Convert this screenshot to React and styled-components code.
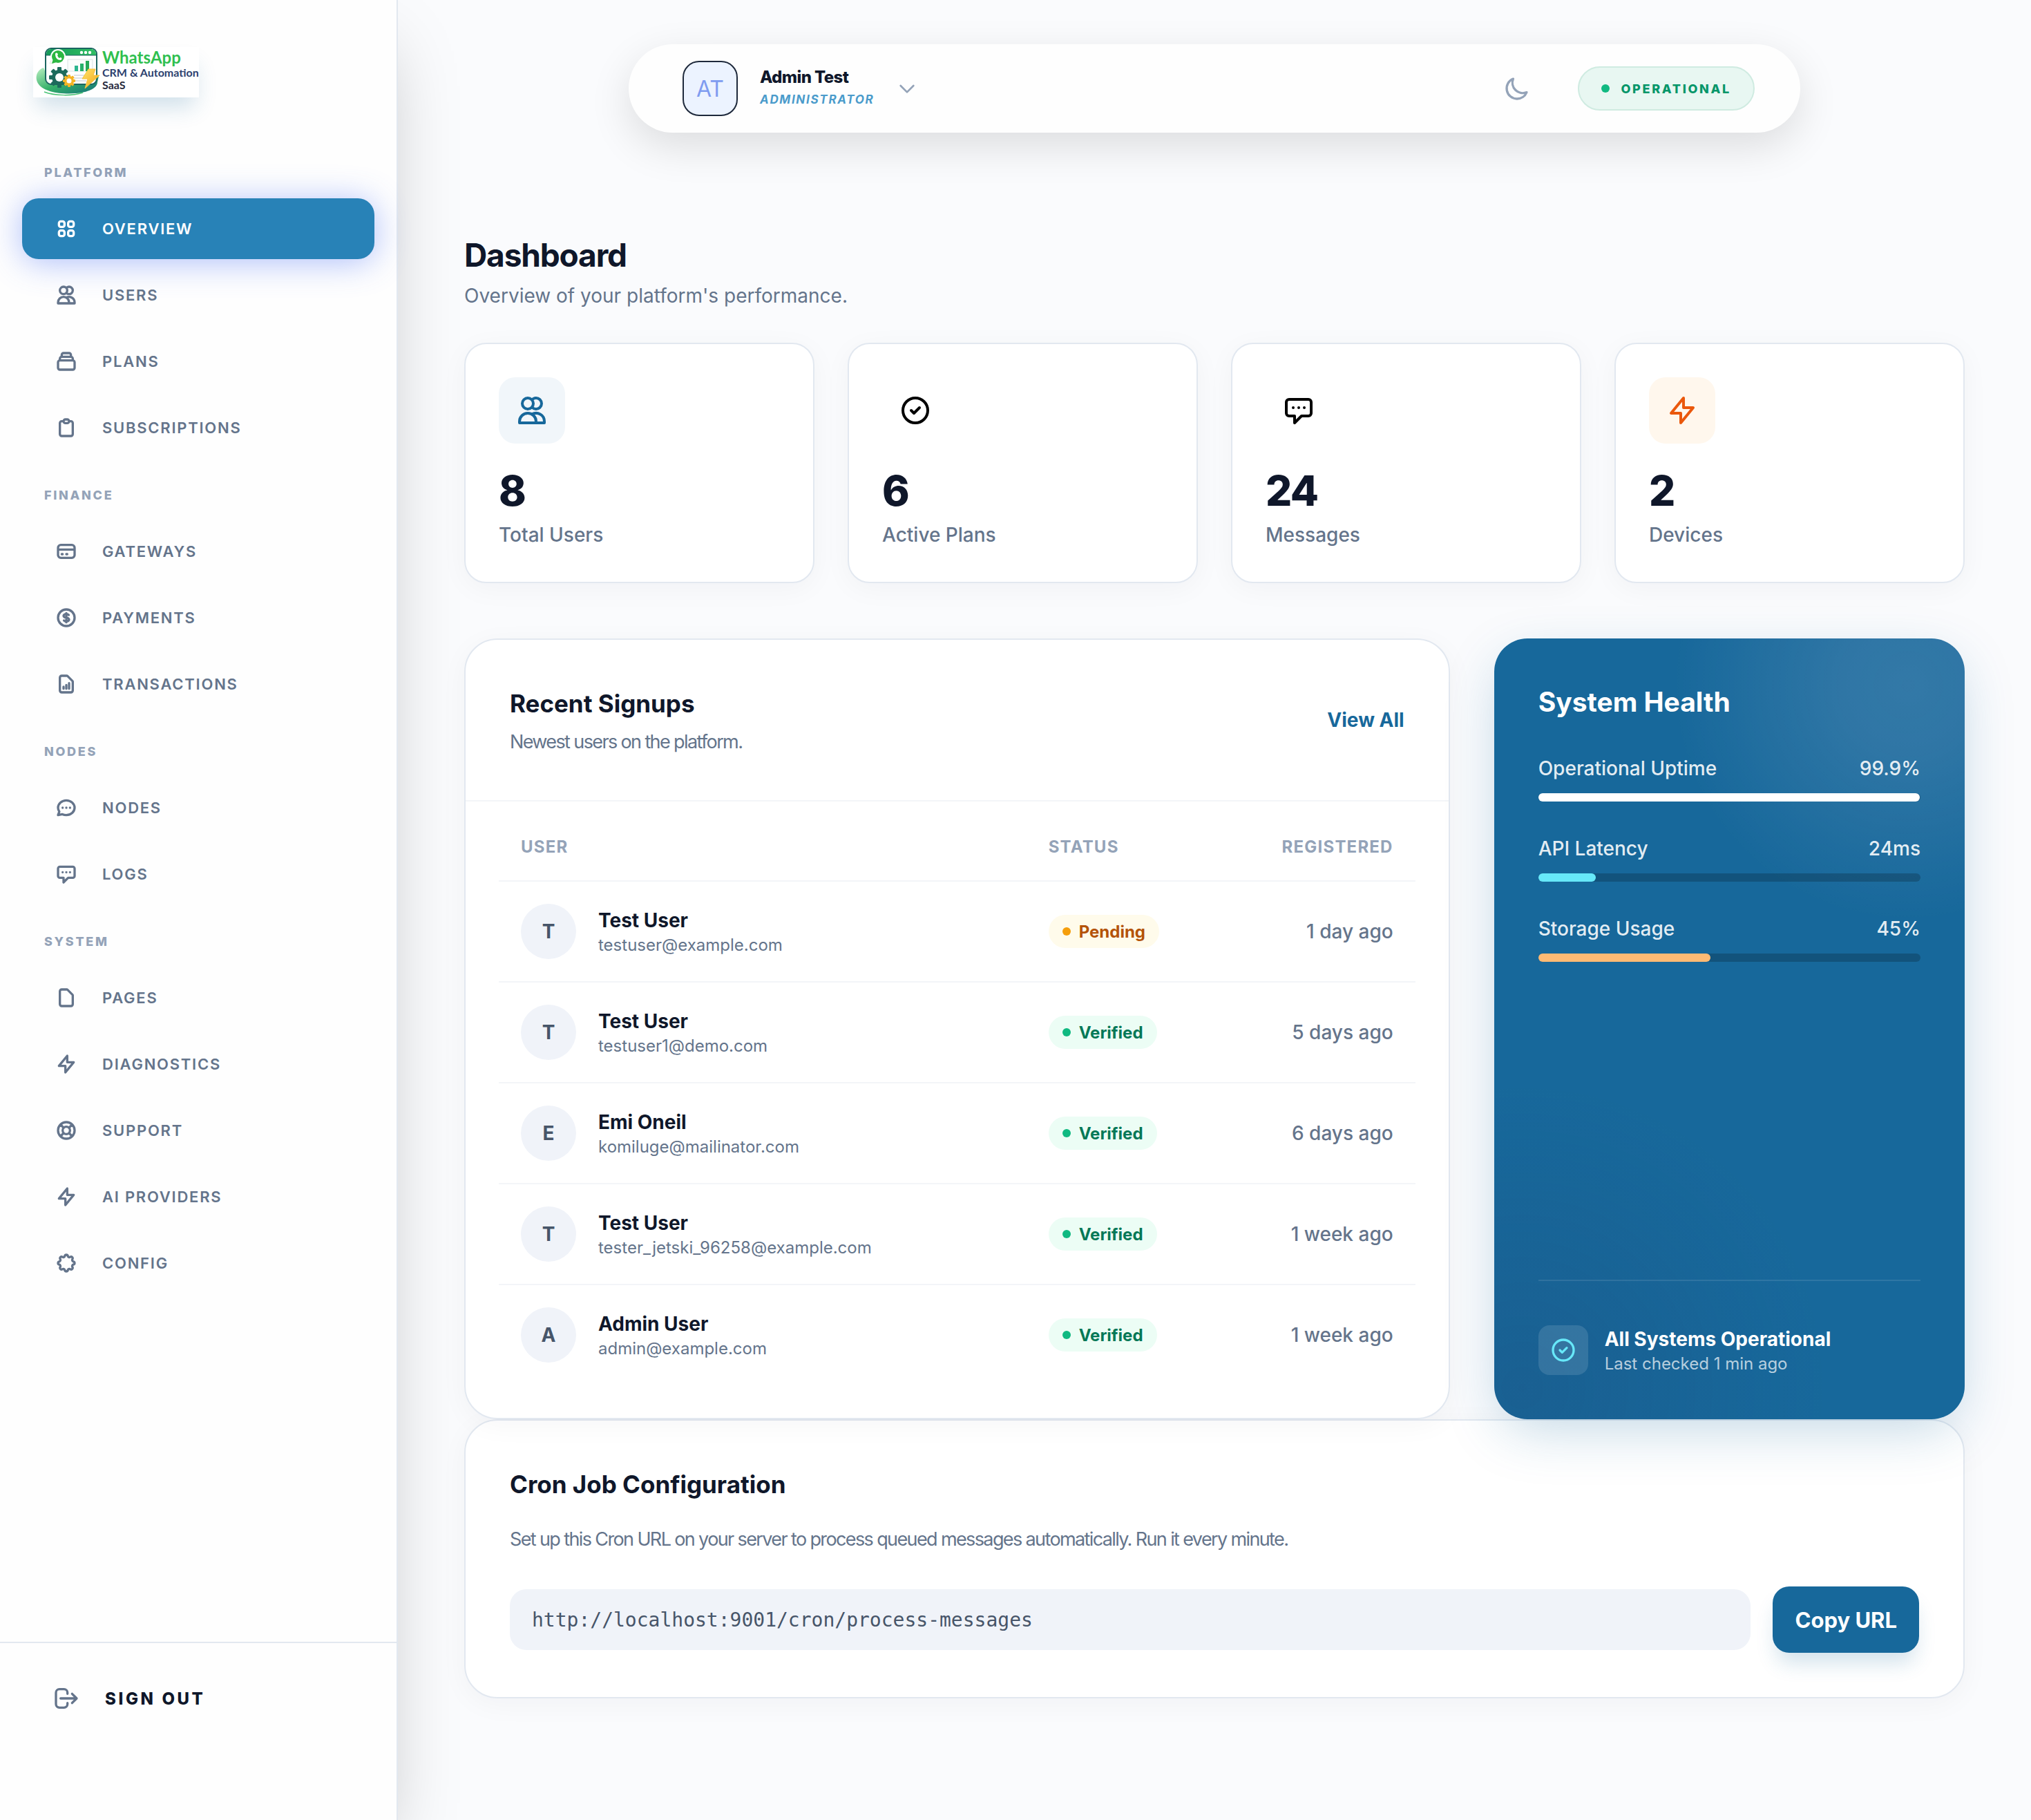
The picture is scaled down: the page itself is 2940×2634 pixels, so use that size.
import React from 'react';
import styled, { createGlobalStyle, css } from 'styled-components';

const color = {
  brand: '#17689b',
  active: '#2882b7',
  ink: '#0f172a',
  body: '#64748b',
  muted: '#94a3b8',
  line: '#e2e8f0',
  hair: '#f3f5f8',
  soft: '#f0f3f9',
  page: '#fafbfd',
};

const GlobalStyle = createGlobalStyle`
  *, *::before, *::after { box-sizing: border-box; }
  body {
    margin: 0;
    background: ${color.page};
    color: ${color.ink};
    font-family: Inter, "Liberation Sans", sans-serif;
    -webkit-font-smoothing: antialiased;
  }
  h1, h2, p { margin: 0; }
  button, input { font-family: inherit; }
  a { text-decoration: none; }
`;

/* ---------- icons ---------- */

const paths = {
  overview:
    'M4 6a2 2 0 012-2h2a2 2 0 012 2v2a2 2 0 01-2 2H6a2 2 0 01-2-2V6zM14 6a2 2 0 012-2h2a2 2 0 012 2v2a2 2 0 01-2 2h-2a2 2 0 01-2-2V6zM4 16a2 2 0 012-2h2a2 2 0 012 2v2a2 2 0 01-2 2H6a2 2 0 01-2-2v-2zM14 16a2 2 0 012-2h2a2 2 0 012 2v2a2 2 0 01-2 2h-2a2 2 0 01-2-2v-2z',
  users:
    'M12 4.354a4 4 0 110 5.292M15 21H3v-1a6 6 0 0112 0v1zm0 0h6v-1a6 6 0 00-9-5.197M13 7a4 4 0 11-8 0 4 4 0 018 0z',
  plans:
    'M19 11H5m14 0a2 2 0 012 2v6a2 2 0 01-2 2H5a2 2 0 01-2-2v-6a2 2 0 012-2m14 0V9a2 2 0 00-2-2M5 11V9a2 2 0 012-2m0 0V5a2 2 0 012-2h6a2 2 0 012 2v2M7 7h10',
  clipboard:
    'M9 5H7a2 2 0 00-2 2v12a2 2 0 002 2h10a2 2 0 002-2V7a2 2 0 00-2-2h-2M9 5a2 2 0 002 2h2a2 2 0 002-2M9 5a2 2 0 012-2h2a2 2 0 012 2',
  card:
    'M3 10h18M7 15h1m4 0h1m-7 4h12a3 3 0 003-3V8a3 3 0 00-3-3H6a3 3 0 00-3 3v8a3 3 0 003 3z',
  dollar:
    'M12 8c-1.657 0-3 .895-3 2s1.343 2 3 2 3 .895 3 2-1.343 2-3 2m0-8c1.11 0 2.08.402 2.599 1M12 8V7m0 1v8m0 0v1m0-1c-1.11 0-2.08-.402-2.599-1M21 12a9 9 0 11-18 0 9 9 0 0118 0z',
  report:
    'M9 17v-2m3 2v-4m3 4v-6m2 10H7a2 2 0 01-2-2V5a2 2 0 012-2h5.586a1 1 0 01.707.293l5.414 5.414a1 1 0 01.293.707V19a2 2 0 01-2 2z',
  chat:
    'M8 12h.01M12 12h.01M16 12h.01M21 12c0 4.418-4.03 8-9 8a9.863 9.863 0 01-4.255-.949L3 20l1.395-3.72C3.512 15.042 3 13.574 3 12c0-4.418 4.03-8 9-8s9 3.582 9 8z',
  message:
    'M8 10h.01M12 10h.01M16 10h.01M9 16H5a2 2 0 01-2-2V6a2 2 0 012-2h14a2 2 0 012 2v8a2 2 0 01-2 2h-5l-5 5v-5z',
  page:
    'M7 21h10a2 2 0 002-2V9.414a1 1 0 00-.293-.707l-5.414-5.414A1 1 0 0012.586 3H7a2 2 0 00-2 2v14a2 2 0 002 2z',
  bolt: 'M13 10V3L4 14h7v7l9-11h-7z',
  lifebuoy:
    'M18.364 5.636l-3.536 3.536m0 5.656l3.536 3.536M9.172 9.172L5.636 5.636m3.536 9.192l-3.536 3.536M21 12a9 9 0 11-18 0 9 9 0 0118 0zm-5 0a4 4 0 11-8 0 4 4 0 018 0z',
  cog:
    'M10.325 4.317c.426-1.756 2.924-1.756 3.35 0a1.724 1.724 0 002.573 1.066c1.543-.94 3.31.826 2.37 2.37a1.724 1.724 0 001.065 2.572c1.756.426 1.756 2.924 0 3.35a1.724 1.724 0 00-1.066 2.573c.94 1.543-.826 3.31-2.37 2.37a1.724 1.724 0 00-2.572 1.065c-.426 1.756-2.924 1.756-3.35 0a1.724 1.724 0 00-2.573-1.066c-1.543.94-3.31-.826-2.37-2.37a1.724 1.724 0 00-1.065-2.572c-1.756-.426-1.756-2.924 0-3.35a1.724 1.724 0 001.066-2.573c-.94-1.543.826-3.31 2.37-2.37.996.608 2.296.07 2.572-1.065z',
  check: 'M9 12l2 2 4-4m6 2a9 9 0 11-18 0 9 9 0 0118 0z',
  signOut:
    'M17 16l4-4m0 0l-4-4m4 4H7m6 4v1a3 3 0 01-3 3H6a3 3 0 01-3-3V7a3 3 0 013-3h4a3 3 0 013 3v1',
  chevron: 'M19 9l-7 7-7-7',
  moon: 'M20.354 15.354A9 9 0 018.646 3.646 9.003 9.003 0 0012 21a9.003 9.003 0 008.354-5.646z',
};

function Icon({ name, size = 32, weight = 2 }) {
  return (
    <svg
      width={size}
      height={size}
      viewBox="0 0 24 24"
      fill="none"
      stroke="currentColor"
      strokeWidth={weight}
      strokeLinecap="round"
      strokeLinejoin="round"
      aria-hidden="true"
    >
      <path d={paths[name]} />
    </svg>
  );
}

function LogoMark() {
  const teeth = [0, 45, 90, 135, 180, 225, 270, 315];
  return (
    <svg width="100" height="72" viewBox="0 0 100 72" aria-hidden="true">
      <defs>
        <linearGradient id="swoosh" x1="0" y1="0" x2="1" y2="1">
          <stop offset="0" stopColor="#b9efc0" />
          <stop offset="0.5" stopColor="#35b069" />
          <stop offset="1" stopColor="#12707a" />
        </linearGradient>
        <linearGradient id="bar" x1="0" y1="0" x2="1" y2="0">
          <stop offset="0" stopColor="#149a58" />
          <stop offset="1" stopColor="#2fbf63" />
        </linearGradient>
        <linearGradient id="flash" x1="0" y1="0" x2="1" y2="1">
          <stop offset="0" stopColor="#ffe36b" />
          <stop offset="1" stopColor="#f2a516" />
        </linearGradient>
      </defs>
      <path d="M15 30C4 34 2 46 8 54c8 11 32 15 54 13 16-1 31-7 31-16l2-9-10 8-62-2z" fill="url(#swoosh)" />
      <path d="M16 65c16 6 42 6 56 1" fill="none" stroke="#4cc477" strokeWidth="1.5" />
      <rect x="18" y="2" width="74" height="52" rx="8" fill="#fff" stroke="#1b6560" strokeWidth="2" />
      <path d="M19 12V10a7 7 0 017-7h58a7 7 0 017 7v2z" fill="url(#bar)" />
      <path d="M18 12h74" stroke="#1b6560" strokeWidth="1" />
      <circle cx="70" cy="8" r="2.2" fill="#fff" />
      <circle cx="76" cy="8" r="2.2" fill="#fff" />
      <circle cx="82" cy="8" r="2.2" fill="#fff" />
      <path d="M50 18h36v17H50z" fill="#fbfdfc" stroke="#dbe4e4" />
      <rect x="60" y="27" width="5" height="8" fill="#2bb58e" />
      <rect x="68" y="24" width="5" height="11" fill="#27b06a" />
      <rect x="76" y="20" width="5" height="15" fill="#24a957" />
      <path d="M59 41h20M59 45h16M59 49h18" stroke="#d3d9de" strokeWidth="1.5" />
      <path d="M24 24l3-6a10 10 0 115 5z" fill="#fff" stroke="#d9ead9" />
      <circle cx="36" cy="14" r="11" fill="#fff" />
      <circle cx="36" cy="14" r="9" fill="#2cb742" />
      <path d="M27 24l2-7 5 5z" fill="#2cb742" />
      <path d="M32 10c0 6 3 9 8 9 2-1 2-3 0-4l-2 1c-2-1-2-2-3-4l1-1c-1-3-3-3-4-1z" fill="#fff" />
      <g transform="translate(38 44)" fill="#1d6a5c">
        {teeth.map((angle) => (
          <rect key={angle} x="-3" y="-15" width="6" height="8" rx="1" transform={`rotate(${angle})`} />
        ))}
        <circle r="11" />
        <circle r="6" fill="#fff" />
      </g>
      <g transform="translate(52 49)" fill="#f6b426">
        {teeth.map((angle) => (
          <rect key={angle} x="-2" y="-9" width="4" height="5" rx="1" transform={`rotate(${angle})`} />
        ))}
        <circle r="7" />
        <circle r="3.5" fill="#fff" />
      </g>
      <path d="M80 32h10l-3 9h9L75 60l4-14h-8z" fill="url(#flash)" stroke="#f6c23a" strokeWidth="1" strokeLinejoin="round" />
    </svg>
  );
}

/* ---------- shell ---------- */

const Shell = styled.div`
  display: grid;
  grid-template-columns: 576px minmax(0, 1fr);
  min-height: 100vh;
`;

const Sidebar = styled.aside`
  display: flex;
  flex-direction: column;
  padding-top: 68px;
  background: #fefefe;
  border-right: 2px solid ${color.line};
  box-shadow: 0 50px 100px -24px rgba(0, 0, 0, 0.25);
`;

const Logo = styled.a`
  display: flex;
  width: 240px;
  height: 73px;
  margin: 0 0 95px 48px;
  background: #fff;
  box-shadow: 0 20px 32px -6px rgba(23, 104, 155, 0.2);
`;

const LogoText = styled.span`
  display: flex;
  flex-direction: column;
  padding-top: 2px;
  font-family: Lato, "Liberation Sans", sans-serif;
  font-weight: 700;
  font-size: 16px;
  line-height: 18px;
  white-space: nowrap;
  color: #272a3c;
`;

const LogoName = styled.span`
  font-size: 24px;
  line-height: 26px;
  color: #2fbf4f;
`;

const LogoTag = styled.span`
  color: #2c3f6e;
`;

const Nav = styled.nav`
  display: flex;
  flex-direction: column;
  gap: 40px;
  padding: 0 32px;
`;

const NavSection = styled.section`
  display: flex;
  flex-direction: column;
  gap: 8px;
`;

const NavLabel = styled.h2`
  padding: 0 32px;
  margin-bottom: 16px;
  font-size: 18px;
  line-height: 27px;
  font-weight: 800;
  letter-spacing: 0.15em;
  color: ${color.muted};
`;

const NavLink = styled.a`
  display: flex;
  align-items: center;
  gap: 36px;
  height: 88px;
  padding: 0 48px;
  border-radius: 24px;
  font-size: 22px;
  font-weight: 600;
  letter-spacing: 0.08em;
  color: ${color.body};
  ${(p) =>
    p.$active &&
    css`
      color: #fff;
      background: ${color.active};
      box-shadow: 0 4px 48px rgba(70, 110, 246, 0.45);
    `}
`;

const SidebarFooter = styled.div`
  margin-top: auto;
  padding: 48px 64px 144px 64px;
  border-top: 2px solid ${color.line};
`;

const SignOut = styled.button`
  display: flex;
  align-items: center;
  gap: 36px;
  height: 64px;
  padding: 0 12px;
  border: 0;
  background: none;
  color: ${color.body};
  cursor: pointer;
`;

const SignOutText = styled.span`
  font-size: 24px;
  font-weight: 800;
  letter-spacing: 0.15em;
  color: ${color.ink};
`;

const Main = styled.main`
  padding: 64px 96px 96px;
`;

/* ---------- top bar ---------- */

const TopBar = styled.header`
  display: flex;
  align-items: center;
  justify-content: space-between;
  max-width: 1696px;
  height: 128px;
  margin: 0 auto 144px;
  padding: 0 66px;
  border-radius: 64px;
  background: #fefefe;
  box-shadow: 0 20px 60px rgba(0, 0, 0, 0.12);
`;

const Account = styled.button`
  display: flex;
  align-items: center;
  gap: 32px;
  padding: 0 12px;
  border: 0;
  background: none;
  text-align: left;
  cursor: pointer;
  color: ${color.muted};
`;

const AccountAvatar = styled.span`
  display: flex;
  align-items: center;
  justify-content: center;
  width: 80px;
  height: 80px;
  border: 2px solid #1e293b;
  border-radius: 24px;
  background: #ecf3ff;
  font-size: 32px;
  color: #7f9cf0;
`;

const AccountText = styled.span`
  display: flex;
  flex-direction: column;
`;

const AccountName = styled.span`
  font-size: 24px;
  line-height: 32px;
  font-weight: 800;
  letter-spacing: -0.025em;
  color: ${color.ink};
`;

const AccountRole = styled.span`
  font-size: 17px;
  line-height: 32px;
  font-weight: 700;
  font-style: italic;
  letter-spacing: 0.1em;
  color: #4a9bcb;
`;

const TopActions = styled.div`
  display: flex;
  align-items: center;
  gap: 44px;
`;

const ThemeButton = styled.button`
  display: flex;
  padding: 24px;
  border: 0;
  background: none;
  color: ${color.muted};
  cursor: pointer;
`;

const SystemBadge = styled.span`
  display: flex;
  align-items: center;
  gap: 16px;
  height: 64px;
  padding: 0 32px;
  border: 2px solid #cfebe1;
  border-radius: 32px;
  background: #e8f7f2;
  font-size: 18px;
  font-weight: 800;
  letter-spacing: 0.15em;
  color: #059669;
`;

const Dot = styled.i`
  width: 12px;
  height: 12px;
  border-radius: 50%;
  background: ${(p) => p.$color};
`;

/* ---------- content ---------- */

const Title = styled.h1`
  font-size: 46px;
  line-height: 66px;
  font-weight: 700;
  letter-spacing: -0.025em;
`;

const Subtitle = styled.p`
  margin: 6px 0 48px;
  font-size: 28px;
  line-height: 40px;
  font-weight: 400;
  color: ${color.body};
`;

const Stats = styled.div`
  display: grid;
  grid-template-columns: repeat(4, minmax(0, 1fr));
  gap: 48px;
  margin-bottom: 80px;
`;

const cardFrame = css`
  border: 2px solid ${color.line};
  background: #fff;
  box-shadow: 0 8px 40px rgba(15, 23, 42, 0.04);
`;

const StatCard = styled.article`
  ${cardFrame}
  padding: 48px;
  border-radius: 32px;
`;

const StatIcon = styled.div`
  display: flex;
  align-items: center;
  justify-content: center;
  width: 96px;
  height: 96px;
  margin-bottom: 32px;
  border-radius: 24px;
  color: ${(p) => p.$color};
  background: ${(p) => p.$bg};
`;

const StatValue = styled.p`
  font-size: 60px;
  line-height: 72px;
  font-weight: 800;
  letter-spacing: -0.025em;
`;

const StatLabel = styled.p`
  margin-top: 8px;
  font-size: 28px;
  line-height: 40px;
  font-weight: 500;
  color: ${color.body};
`;

const Columns = styled.div`
  display: grid;
  grid-template-columns: repeat(3, minmax(0, 1fr));
  column-gap: 64px;
`;

const Panel = styled.section`
  ${cardFrame}
  border-radius: 48px;
`;

const SignupsPanel = styled(Panel)`
  grid-column: span 2;
`;

const PanelHead = styled.div`
  display: flex;
  align-items: center;
  justify-content: space-between;
  padding: 64px;
  border-bottom: 2px solid ${color.hair};
`;

const PanelTitle = styled.h2`
  font-size: 35px;
  line-height: 56px;
  font-weight: 700;
`;

const PanelText = styled.p`
  margin-top: ${(p) => p.$gap}px;
  font-size: 27px;
  line-height: 40px;
  letter-spacing: -0.06em;
  color: ${color.body};
`;

const ViewAll = styled.a`
  font-size: 28px;
  font-weight: 700;
  color: ${color.brand};
`;

const TableWrap = styled.div`
  padding: 18px 48px 48px;
`;

const Table = styled.table`
  width: 100%;
  table-layout: fixed;
  border-collapse: separate;
  border-spacing: 0;
`;

const Th = styled.th`
  width: ${(p) => p.$width || 'auto'};
  padding: 32px;
  border-bottom: 2px solid ${color.hair};
  font-size: 24px;
  line-height: 32px;
  font-weight: 700;
  letter-spacing: 0.05em;
  text-align: ${(p) => p.$align || 'left'};
  color: ${color.muted};
`;

const Td = styled.td`
  padding: 32px;
  border-bottom: 2px solid ${color.hair};
  font-size: 28px;
  font-weight: 500;
  text-align: ${(p) => p.$align || 'left'};
  color: ${color.body};
  tr:last-child > & {
    border-bottom: 0;
  }
`;

const Person = styled.div`
  display: flex;
  align-items: center;
  gap: 32px;
`;

const PersonAvatar = styled.span`
  display: flex;
  align-items: center;
  justify-content: center;
  flex: none;
  width: 80px;
  height: 80px;
  border-radius: 50%;
  background: ${color.soft};
  font-size: 28px;
  font-weight: 700;
  color: #475569;
`;

const PersonName = styled.p`
  font-size: 28px;
  line-height: 40px;
  font-weight: 700;
  color: ${color.ink};
`;

const PersonEmail = styled.p`
  font-size: 24px;
  line-height: 32px;
  font-weight: 400;
`;

const tones = {
  Pending: { bg: '#fffbeb', fg: '#b45309', dot: '#f59e0b' },
  Verified: { bg: '#ecfdf5', fg: '#047857', dot: '#10b981' },
};

const Status = styled.span`
  display: inline-flex;
  align-items: center;
  gap: 12px;
  height: 48px;
  padding: 0 20px;
  border-radius: 24px;
  font-size: 24px;
  font-weight: 700;
  vertical-align: middle;
  color: ${(p) => tones[p.$tone].fg};
  background: ${(p) => tones[p.$tone].bg};
`;

const Health = styled.section`
  position: relative;
  display: flex;
  flex-direction: column;
  padding: 64px;
  border-radius: 48px;
  color: #fff;
  background:
    radial-gradient(circle at 88% 6%, rgba(255, 240, 255, 0.12), rgba(255, 240, 255, 0.1) 100px, transparent 340px),
    radial-gradient(circle at 6% 96%, rgba(40, 45, 90, 0.14), transparent 440px),
    ${color.brand};
  box-shadow: 0 24px 80px -12px rgba(23, 104, 155, 0.27);
`;

const HealthTitle = styled.h2`
  font-size: 39px;
  line-height: 56px;
  font-weight: 700;
`;

const Metrics = styled.div`
  display: flex;
  flex-direction: column;
  gap: 48px;
  margin-top: 48px;
`;

const MetricHead = styled.div`
  display: flex;
  justify-content: space-between;
  margin-bottom: 16px;
  font-size: 28px;
  line-height: 40px;
  font-weight: 500;
  color: rgba(255, 255, 255, 0.9);
`;

const Track = styled.div`
  height: 12px;
  border-radius: 6px;
  background: rgba(0, 0, 0, 0.2);
`;

const Fill = styled.div`
  height: 12px;
  border-radius: 6px;
  background: ${(p) => p.$color};
`;

const HealthFoot = styled.div`
  display: flex;
  align-items: center;
  gap: 24px;
  margin-top: auto;
  padding-top: 64px;
  border-top: 2px solid rgba(255, 255, 255, 0.1);
`;

const HealthIcon = styled.span`
  display: flex;
  align-items: center;
  justify-content: center;
  width: 72px;
  height: 72px;
  border-radius: 16px;
  background: rgba(255, 255, 255, 0.12);
  color: #67e8f9;
`;

const HealthState = styled.p`
  font-size: 28px;
  line-height: 40px;
  font-weight: 700;
`;

const HealthTime = styled.p`
  font-size: 24px;
  line-height: 32px;
  color: rgba(255, 255, 255, 0.7);
`;

const CronPanel = styled(Panel)`
  padding: 64px;
`;

const CronRow = styled.div`
  display: flex;
  align-items: center;
  gap: 32px;
  margin-top: 48px;
`;

const CronInput = styled.input`
  flex: 1;
  min-width: 0;
  height: 88px;
  padding: 0 32px;
  border: 0;
  border-radius: 24px;
  background: ${color.soft};
  font-family: "DejaVu Sans Mono", "Liberation Mono", monospace;
  font-size: 28px;
  color: #475569;
`;

const CopyButton = styled.button`
  height: 96px;
  padding: 0 32px;
  border: 0;
  border-radius: 24px;
  font-size: 31px;
  font-weight: 700;
  color: #fff;
  background: ${color.brand};
  box-shadow: 0 20px 30px -6px rgba(23, 104, 155, 0.2);
  cursor: pointer;
`;

/* ---------- data ---------- */

const menu = [
  {
    label: 'PLATFORM',
    items: [
      ['OVERVIEW', 'overview'],
      ['USERS', 'users'],
      ['PLANS', 'plans'],
      ['SUBSCRIPTIONS', 'clipboard'],
    ],
  },
  {
    label: 'FINANCE',
    items: [
      ['GATEWAYS', 'card'],
      ['PAYMENTS', 'dollar'],
      ['TRANSACTIONS', 'report'],
    ],
  },
  {
    label: 'NODES',
    items: [
      ['NODES', 'chat'],
      ['LOGS', 'message'],
    ],
  },
  {
    label: 'SYSTEM',
    items: [
      ['PAGES', 'page'],
      ['DIAGNOSTICS', 'bolt'],
      ['SUPPORT', 'lifebuoy'],
      ['AI PROVIDERS', 'bolt'],
      ['CONFIG', 'cog'],
    ],
  },
];

const stats = [
  { value: '8', label: 'Total Users', icon: 'users', fg: color.brand, bg: '#f1f6fa' },
  { value: '6', label: 'Active Plans', icon: 'check', fg: '#000', bg: 'transparent' },
  { value: '24', label: 'Messages', icon: 'message', fg: '#000', bg: 'transparent' },
  { value: '2', label: 'Devices', icon: 'bolt', fg: '#ea580c', bg: '#fff7ed' },
];

const signups = [
  { name: 'Test User', email: 'testuser@example.com', status: 'Pending', when: '1 day ago' },
  { name: 'Test User', email: 'testuser1@demo.com', status: 'Verified', when: '5 days ago' },
  { name: 'Emi Oneil', email: 'komiluge@mailinator.com', status: 'Verified', when: '6 days ago' },
  { name: 'Test User', email: 'tester_jetski_96258@example.com', status: 'Verified', when: '1 week ago' },
  { name: 'Admin User', email: 'admin@example.com', status: 'Verified', when: '1 week ago' },
];

const metrics = [
  { label: 'Operational Uptime', value: '99.9%', share: 99.9, color: '#fff' },
  { label: 'API Latency', value: '24ms', share: 15, color: '#67e8f9' },
  { label: 'Storage Usage', value: '45%', share: 45, color: '#fdba74' },
];

/* ---------- page ---------- */

export default function App() {
  return (
    <>
      <GlobalStyle />
      <Shell>
        <Sidebar>
          <Logo href="#">
            <LogoMark />
            <LogoText>
              <LogoName>WhatsApp</LogoName>
              <LogoTag>CRM &amp; Automation</LogoTag>
              <span>SaaS</span>
            </LogoText>
          </Logo>
          <Nav>
            {menu.map((section) => (
              <NavSection key={section.label}>
                <NavLabel>{section.label}</NavLabel>
                {section.items.map(([label, icon]) => (
                  <NavLink key={label} href="#" $active={label === 'OVERVIEW'}>
                    <Icon name={icon} weight={2.5} />
                    {label}
                  </NavLink>
                ))}
              </NavSection>
            ))}
          </Nav>
          <SidebarFooter>
            <SignOut type="button">
              <Icon name="signOut" size={40} />
              <SignOutText>SIGN OUT</SignOutText>
            </SignOut>
          </SidebarFooter>
        </Sidebar>

        <Main>
          <TopBar>
            <Account type="button">
              <AccountAvatar>AT</AccountAvatar>
              <AccountText>
                <AccountName>Admin Test</AccountName>
                <AccountRole>ADMINISTRATOR</AccountRole>
              </AccountText>
              <Icon name="chevron" />
            </Account>
            <TopActions>
              <ThemeButton type="button" aria-label="Toggle dark mode">
                <Icon name="moon" size={40} />
              </ThemeButton>
              <SystemBadge>
                <Dot $color="#10b981" />
                OPERATIONAL
              </SystemBadge>
            </TopActions>
          </TopBar>

          <Title>Dashboard</Title>
          <Subtitle>Overview of your platform's performance.</Subtitle>

          <Stats>
            {stats.map((stat) => (
              <StatCard key={stat.label}>
                <StatIcon $color={stat.fg} $bg={stat.bg}>
                  <Icon name={stat.icon} size={48} />
                </StatIcon>
                <StatValue>{stat.value}</StatValue>
                <StatLabel>{stat.label}</StatLabel>
              </StatCard>
            ))}
          </Stats>

          <Columns>
            <SignupsPanel>
              <PanelHead>
                <div>
                  <PanelTitle>Recent Signups</PanelTitle>
                  <PanelText $gap={8}>Newest users on the platform.</PanelText>
                </div>
                <ViewAll href="#">View All</ViewAll>
              </PanelHead>
              <TableWrap>
                <Table>
                  <thead>
                    <tr>
                      <Th>USER</Th>
                      <Th $width="280px">STATUS</Th>
                      <Th $width="283px" $align="right">REGISTERED</Th>
                    </tr>
                  </thead>
                  <tbody>
                    {signups.map((row) => (
                      <tr key={row.email}>
                        <Td>
                          <Person>
                            <PersonAvatar>{row.name[0]}</PersonAvatar>
                            <div>
                              <PersonName>{row.name}</PersonName>
                              <PersonEmail>{row.email}</PersonEmail>
                            </div>
                          </Person>
                        </Td>
                        <Td>
                          <Status $tone={row.status}>
                            <Dot $color={tones[row.status].dot} />
                            {row.status}
                          </Status>
                        </Td>
                        <Td $align="right">{row.when}</Td>
                      </tr>
                    ))}
                  </tbody>
                </Table>
              </TableWrap>
            </SignupsPanel>

            <Health>
              <HealthTitle>System Health</HealthTitle>
              <Metrics>
                {metrics.map((metric) => (
                  <div key={metric.label}>
                    <MetricHead>
                      <span>{metric.label}</span>
                      <span>{metric.value}</span>
                    </MetricHead>
                    <Track>
                      <Fill $color={metric.color} style={{ width: `${metric.share}%` }} />
                    </Track>
                  </div>
                ))}
              </Metrics>
              <HealthFoot>
                <HealthIcon>
                  <Icon name="check" size={40} />
                </HealthIcon>
                <div>
                  <HealthState>All Systems Operational</HealthState>
                  <HealthTime>Last checked 1 min ago</HealthTime>
                </div>
              </HealthFoot>
            </Health>
          </Columns>

          <CronPanel>
            <PanelTitle>Cron Job Configuration</PanelTitle>
            <PanelText $gap={32}>
              Set up this Cron URL on your server to process queued messages automatically. Run it every minute.
            </PanelText>
            <CronRow>
              <CronInput
                type="text"
                readOnly
                aria-label="Cron URL"
                value="http://localhost:9001/cron/process-messages"
              />
              <CopyButton type="button">Copy URL</CopyButton>
            </CronRow>
          </CronPanel>
        </Main>
      </Shell>
    </>
  );
}
